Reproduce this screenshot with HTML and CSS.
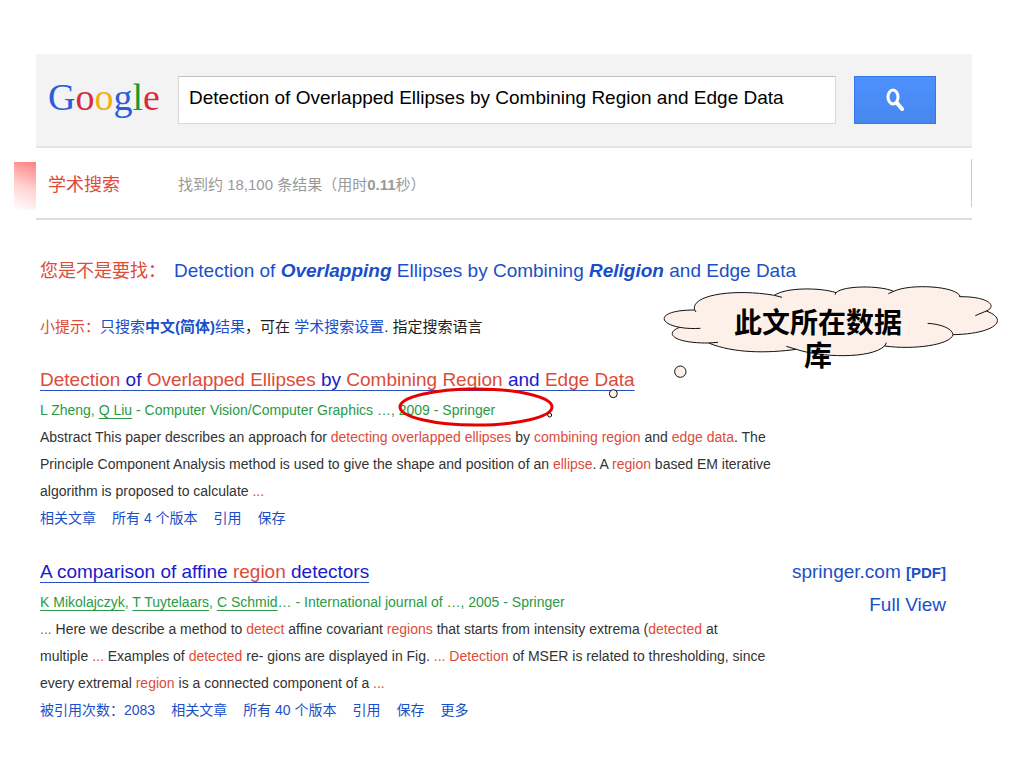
FILE: index.html
```html
<!DOCTYPE html>
<html lang="zh-CN">

<head>
    <meta charset="UTF-8">
    <meta name="viewport" content="width=device-width, initial-scale=1.0">
    <title>学术搜索</title>
    <link rel="stylesheet" href="styles.css">
</head>

<body>
    <div class="page">
        <header class="search-bar">
            <a class="logo" href="#"><span class="blue">G</span><span class="red">o</span><span class="yellow">o</span><span class="blue">g</span><span class="green">l</span><span class="red">e</span></a>
            <form class="search-form">
                <input type="text" class="search-input" name="q" aria-label="搜索" value="Detection of Overlapped Ellipses by Combining Region and Edge Data">
                <button type="submit" class="search-btn" aria-label="搜索">
                    <svg width="18" height="24" viewBox="0 0 18 24">
                        <ellipse cx="7" cy="9" rx="5" ry="7" fill="none" stroke="#fff" stroke-width="3" />
                        <path d="M11 15 L16 21" stroke="#fff" stroke-width="4" stroke-linecap="round" />
                    </svg>
                </button>
            </form>
        </header>

        <div class="info-bar">
            <div class="section-name">学术搜索</div>
            <div class="stats">找到约 18,100 条结果（用时<b>0.11</b>秒）</div>
        </div>

        <main class="content">
            <p class="suggest"><span class="label">您是不是要找：</span><a href="#">Detection of <b><i>Overlapping</i></b> Ellipses by Combining <b><i>Religion</i></b> and Edge Data</a></p>
            <p class="tip"><span class="label">小提示：</span><a href="#">只搜索<b>中文(简体)</b>结果</a>，可在 <a href="#">学术搜索设置</a>. 指定搜索语言</p>

            <article class="result">
                <div class="result-text">
                    <h3><a href="#"><em>Detection</em> of <em>Overlapped Ellipses</em> by <em>Combining Region</em> and <em>Edge Data</em></a></h3>
                    <div class="authors">L Zheng, <a href="#">Q Liu</a> - Computer Vision/Computer Graphics …, 2009 - Springer</div>
                    <p class="abstract">
                        Abstract This paper describes an approach for <em>detecting overlapped ellipses</em> by <em>combining region</em> and <em>edge data</em>. The<br>
                        Principle Component Analysis method is used to give the shape and position of an <em>ellipse</em>. A <em>region</em> based EM iterative<br>
                        algorithm is proposed to calculate <em>...</em>
                    </p>
                    <div class="links">
                        <a href="#">相关文章</a>
                        <a href="#">所有 4 个版本</a>
                        <a href="#">引用</a>
                        <a href="#">保存</a>
                    </div>
                </div>
            </article>

            <article class="result">
                <div class="result-text">
                    <h3><a href="#">A comparison of affine <em>region</em> detectors</a></h3>
                    <div class="authors"><a href="#">K Mikolajczyk</a>, <a href="#">T Tuytelaars</a>, <a href="#">C Schmid</a>… - International journal of …, 2005 - Springer</div>
                    <p class="abstract">
                        <em>...</em> Here we describe a method to <em>detect</em> affine covariant <em>regions</em> that starts from intensity extrema (<em>detected</em> at<br>
                        multiple <em>...</em> Examples of <em>detected</em> re- gions are displayed in Fig. <em>... Detection</em> of MSER is related to thresholding, since<br>
                        every extremal <em>region</em> is a connected component of a <em>...</em>
                    </p>
                    <div class="links">
                        <a href="#">被引用次数：2083</a>
                        <a href="#">相关文章</a>
                        <a href="#">所有 40 个版本</a>
                        <a href="#">引用</a>
                        <a href="#">保存</a>
                        <a href="#">更多</a>
                    </div>
                </div>
                <div class="result-side">
                    <a href="#">springer.com <b>[PDF]</b></a>
                    <a href="#">Full View</a>
                </div>
            </article>
        </main>
    </div>

    <!-- Slide decoration and annotations -->
    <div class="corner"></div>

    <svg class="ring" width="156" height="42" viewBox="0 0 156 42">
        <ellipse cx="78" cy="21" rx="76" ry="18" fill="none" stroke="#e80000" stroke-width="3" />
    </svg>

    <div class="callout">
        <svg class="cloud" width="480" height="150" viewBox="0 0 1440 450" fill="#fcf0e8" stroke="#111" stroke-width="3">
            <path d="M503 120 C490 75 620 55 742 76 C775 52 880 52 927 68 C950 46 1060 46 1100 64 C1150 40 1290 48 1300 80 C1390 80 1410 110 1378 123 C1450 150 1400 192 1278 194 C1270 225 1160 240 1073 228 C1030 268 880 262 808 238 C720 250 620 250 545 219 C440 220 410 190 458 172 C390 160 390 120 503 120 Z" />
            <path fill="none" d="M503 120 L507 126 M742 76 L765 82 M927 68 L924 74 M1100 64 L1084 71 M1300 80 L1296 78 M1378 123 L1345 137 M1278 194 C1276 175 1240 162 1202 160 M1073 228 L1078 218 M808 238 L778 229 M545 219 L573 217 M458 172 C480 176 500 176 520 175" />
            <circle cx="460" cy="305" r="17" />
            <circle cx="259" cy="371" r="12" />
            <circle cx="68" cy="435" r="6" />
        </svg>
        <div class="callout-text">此文所在数据库</div>
    </div>
</body>

</html>
```

FILE: styles.css
```css
* {
    box-sizing: border-box;
}

body {
    position: relative;
    margin: 0;
    padding: 54px 52px 0 36px;
    background-color: #fff;
    color: #333;
    font-family: "Liberation Sans", "Noto Sans CJK SC", sans-serif;
}

a {
    color: #1a4fc8;
    text-decoration: none;
}

em {
    color: #dd4b39;
    font-style: normal;
}

/* Search bar */
.search-bar {
    display: flex;
    align-items: center;
    height: 94px;
    padding: 0 36px 0 12px;
    background-color: #f3f3f3;
    border-bottom: 2px solid #e5e5e5;
}

.logo {
    width: 130px;
    padding-bottom: 6px;
    font-family: "Liberation Serif", serif;
    font-size: 38px;
    line-height: 48px;
}

.blue {
    color: #2a5ddb;
}

.red {
    color: #d62c40;
}

.yellow {
    color: #f0b010;
}

.green {
    color: #109a38;
}

.search-form {
    display: flex;
    flex: 1;
    gap: 18px;
}

.search-input {
    flex: 1;
    min-width: 0;
    height: 48px;
    padding: 0 10px 4px;
    border: 1px solid #d9d9d9;
    border-top-color: #c0c0c0;
    background-color: #fff;
    color: #000;
    font-family: inherit;
    font-size: 19px;
}

.search-btn {
    display: flex;
    align-items: center;
    justify-content: center;
    width: 82px;
    height: 48px;
    padding: 0;
    border: 1px solid #3079ed;
    background: linear-gradient(#4d90fe, #4787ed);
    cursor: pointer;
}

/* Result count */
.info-bar {
    display: flex;
    align-items: center;
    height: 72px;
    padding-left: 12px;
    border-bottom: 2px solid #dedede;
    background: linear-gradient(#ccc, #ccc) right center / 1px 48px no-repeat;
}

.section-name {
    width: 130px;
    color: #dd4b39;
    font-size: 18px;
}

.stats {
    color: #999;
    font-size: 15px;
}

/* Results */
.content {
    padding: 35px 26px 0 4px;
    white-space: nowrap;
}

.suggest,
.tip {
    margin: 0;
    line-height: 32px;
}

.suggest {
    font-size: 19px;
}

.suggest .label {
    display: inline-block;
    width: 134px;
    font-size: 18px;
}

.label {
    color: #dd4b39;
}

.tip {
    margin: 24px 0 21px;
    color: #222;
    font-size: 15px;
}

.result {
    display: flex;
    justify-content: space-between;
    margin-bottom: 25px;
}

.result h3 {
    margin: 0;
    font-size: 19px;
    font-weight: normal;
    line-height: 32px;
}

.result h3 a {
    color: #1a1acc;
    text-decoration: underline;
    text-decoration-color: #2a4fc0;
    text-underline-offset: 4px;
}

.authors {
    color: #2a9a48;
    font-size: 14px;
    line-height: 28px;
}

.authors a {
    color: inherit;
    text-decoration: underline;
    text-underline-offset: 3px;
}

.abstract {
    margin: 0;
    font-size: 14px;
    line-height: 27px;
}

.links {
    display: flex;
    gap: 16px;
    font-size: 14px;
    line-height: 26px;
}

.result-side {
    display: flex;
    flex-direction: column;
    align-items: flex-end;
    font-size: 19px;
    line-height: 32px;
}

.result-side b {
    font-size: 15px;
}

/* Annotations drawn over the page */
.corner {
    position: absolute;
    left: 14px;
    top: 162px;
    width: 22px;
    height: 48px;
    background: linear-gradient(200deg, #ff8080, #ffd0d0 50%, #fff);
}

.ring {
    position: absolute;
    left: 398px;
    top: 386px;
}

.callout {
    position: absolute;
    left: 527px;
    top: 270px;
}

.callout-text {
    position: absolute;
    left: 200px;
    top: 35px;
    width: 182px;
    color: #000;
    font-family: "Noto Sans CJK SC", sans-serif;
    font-size: 28px;
    font-weight: bold;
    line-height: 33px;
    text-align: center;
}
```
